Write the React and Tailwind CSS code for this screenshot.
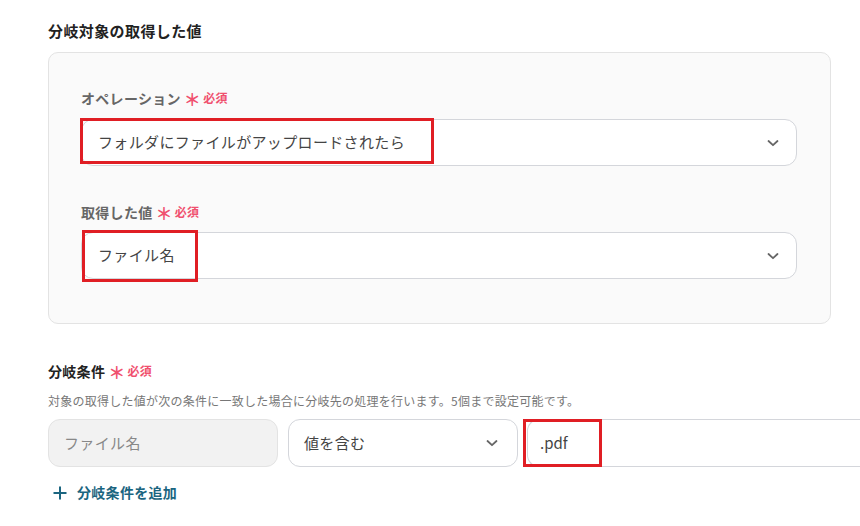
import React from "react";

const font = { fontFamily: '"Noto Sans CJK JP", "Noto Sans", sans-serif' };

function Chevron() {
  return (
    <svg width="14" height="14" viewBox="0 0 14 14" fill="none" className="shrink-0">
      <path d="M2.5 5 L7 9.2 L11.5 5" stroke="#666" strokeWidth="1.8" strokeLinecap="round" strokeLinejoin="round" />
    </svg>
  );
}

function Required() {
  return (
    <span className="ml-[3px] inline-flex items-center text-[12px] font-bold text-[#f0506e]">
      <span className="mr-[2px] text-[17px] leading-none">＊</span>必須
    </span>
  );
}

export default function App() {
  return (
    <div style={font} className="w-[860px] h-[526px] overflow-hidden bg-white pl-[48px] pt-[20px]">
      <div className="text-[15px] font-bold text-[#222] leading-[22px] tracking-[0.4px]">分岐対象の取得した値</div>
      <div className="mt-[10px] w-[783px] rounded-[10px] border border-[#e3e3e3] bg-[#fafafa] pl-[32px] pr-[33px] pt-[35px] pb-[44px]">
        <div className="flex items-center h-[20px] text-[14px] font-bold text-[#666] tracking-[0.3px]">
          オペレーション<Required />
        </div>
        <div className="relative mt-[11px] flex h-[47px] items-center justify-between rounded-[12px] border border-[#d4d6db] bg-white pl-[16px] pr-[16px]">
          <span className="text-[15px] text-[#444] tracking-[0.35px]">フォルダにファイルがアップロードされたら</span>
          <Chevron />
          <div className="absolute left-[-2px] top-[-2px] h-[46px] w-[354px] border-[3px] border-[#e01e24]" />
        </div>
        <div className="mt-[36px] flex items-center h-[20px] text-[14px] font-bold text-[#666] tracking-[0.3px]">
          取得した値<Required />
        </div>
        <div className="relative mt-[10px] flex h-[47px] items-center justify-between rounded-[12px] border border-[#d4d6db] bg-white pl-[16px] pr-[16px]">
          <span className="text-[15px] text-[#444] tracking-[0.35px]">ファイル名</span>
          <Chevron />
          <div className="absolute left-[0px] top-[-3px] h-[52px] w-[116px] border-[3px] border-[#e01e24]" />
        </div>
      </div>

      <div className="mt-[36px] flex items-center h-[22px] text-[14px] font-bold text-[#222] tracking-[0.3px]">
        分岐条件<Required />
      </div>
      <div className="mt-[11px] text-[12px] leading-[16px] text-[#777] tracking-[0.25px]">
        対象の取得した値が次の条件に一致した場合に分岐先の処理を行います。5個まで設定可能です。
      </div>
      <div className="mt-[10px] flex gap-[10px] h-[48px]">
        <div className="flex w-[230px] items-center rounded-[12px] border border-[#e3e3e3] bg-[#f2f2f2] pl-[15px]">
          <span className="text-[15px] text-[#888] tracking-[0.35px]">ファイル名</span>
        </div>
        <div className="flex w-[230px] items-center justify-between rounded-[12px] border border-[#d4d6db] bg-white pl-[15px] pr-[18px]">
          <span className="text-[15px] text-[#444] tracking-[0.35px]">値を含む</span>
          <Chevron />
        </div>
        <div className="relative ml-[-1px] flex flex-1 items-center rounded-l-[12px] border border-r-0 border-[#d4d6db] bg-white pl-[12px]">
          <span className="text-[15px] text-[#444]">.pdf</span>
          <div className="absolute left-[-5px] top-[-1px] h-[48px] w-[79px] border-[3px] border-[#e01e24]" />
        </div>
      </div>
      <div className="mt-[15px] flex items-center gap-[9px] pl-[4px] text-[14px] font-bold text-[#1b6580] tracking-[0.3px]">
        <svg width="16" height="16" viewBox="0 0 16 16" fill="none">
          <path d="M8 1.5 V14.5 M1.5 8 H14.5" stroke="#1b6580" strokeWidth="2" />
        </svg>
        分岐条件を追加
      </div>
    </div>
  );
}
